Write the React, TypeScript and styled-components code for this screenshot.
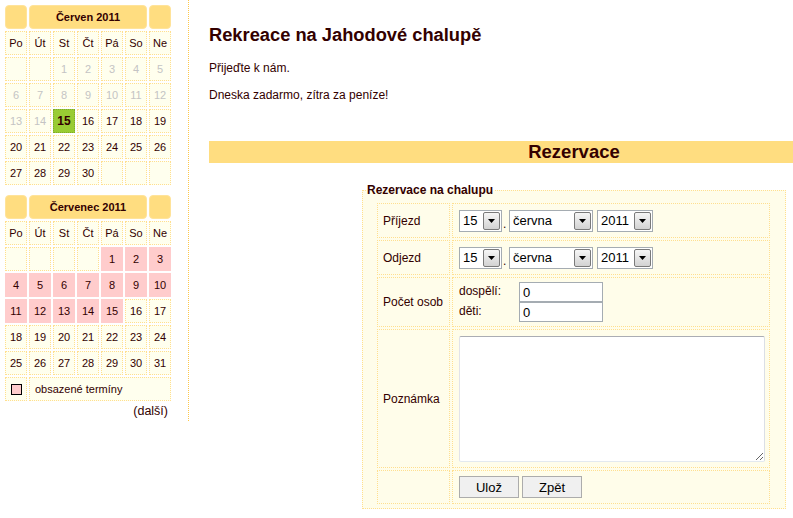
import React from 'react';
import styled, { createGlobalStyle, css } from 'styled-components';

const Global = createGlobalStyle`
  html, body { margin: 0; padding: 0; background: #fff; overflow: hidden; }
  body { font-family: "Liberation Sans", Arial, sans-serif; color: #330000; font-size: 12px; }
`;

const Page = styled.div`
  display: flex;
  align-items: flex-start;
  width: 100%;
  overflow: hidden;
`;

const Sidebar = styled.aside`
  box-sizing: border-box;
  width: 189px;
  flex: none;
  padding: 5px 0 2px 5px;
  border-right: 1px dotted #ffc84a;
  display: flex;
  flex-direction: column;
  gap: 10px;
`;

const CalGrid = styled.div`
  display: grid;
  grid-template-columns: repeat(7, 22px);
  grid-auto-rows: 24px;
  gap: 2px;
  font-size: 11px;
`;

type Kind = 'corner' | 'title' | 'dow' | 'day' | 'muted' | 'today' | 'busy' | 'empty';

const Cell = styled.div<{ $kind: Kind; $span?: number }>`
  box-sizing: border-box;
  display: flex;
  align-items: center;
  justify-content: center;
  grid-column: span ${(p) => p.$span ?? 1};
  background: #ffffee;
  border: 1px dotted #ffdf90;
  color: #330000;
  ${(p) =>
    (p.$kind === 'corner' || p.$kind === 'title') &&
    css`
      background: #ffdd80;
      border: 1px solid #ffe39a;
      border-radius: 4px;
      font-weight: bold;
    `}
  ${(p) => p.$kind === 'muted' && css`color: #c4c4c4;`}
  ${(p) =>
    p.$kind === 'today' &&
    css`
      background: #99cc33;
      border: 1px dotted #7ea82a;
      font-weight: bold;
      font-size: 12px;
    `}
  ${(p) =>
    p.$kind === 'busy' &&
    css`
      background: #ffcccc;
      border: 1px solid #ffcccc;
    `}
`;

const LegendCell = styled(Cell)`
  justify-content: flex-start;
  padding-left: 5px;
`;

const Swatch = styled.span`
  box-sizing: border-box;
  width: 11px;
  height: 11px;
  background: #ffcccc;
  border: 1px solid #000;
`;

const MoreLink = styled.a`
  align-self: flex-end;
  margin: -7px 20px 0 0;
  font-size: 12.5px;
  line-height: 15px;
  color: #330000;
  text-decoration: none;
`;

const Main = styled.main`
  box-sizing: border-box;
  width: 730px;
  margin-left: 20px;
  padding-top: 24px;
  flex: none;
`;

const Title = styled.h1`
  margin: 0;
  font-size: 18.3px;
  line-height: 21px;
  font-weight: bold;
  color: #330000;
`;

const Para = styled.p`
  margin: 16px 0 0;
  font-size: 12px;
  line-height: 14px;
  & + & { margin-top: 13px; }
`;

const Band = styled.h2`
  margin: 39px 0 0;
  height: 22px;
  background: #ffdd80;
  font-size: 18.5px;
  line-height: 22px;
  text-align: center;
  font-weight: bold;
  color: #330000;
`;

const Fieldset = styled.fieldset`
  box-sizing: border-box;
  width: 424px;
  margin: 20px auto 0;
  padding: 6px 14px 4px;
  border: 1px dotted #ffdf90;
  background: #fffdea;
`;

const Legend = styled.legend`
  padding: 0 1px;
  margin-left: -11px;
  font-size: 12px;
  line-height: 14px;
  font-weight: bold;
  color: #330000;
`;

const FormTable = styled.div`
  display: grid;
  grid-template-columns: 73px 318px;
  grid-template-rows: 35px 35px 50px 139px 34px;
  gap: 2px;
`;

const FCell = styled.div<{ $label?: boolean }>`
  box-sizing: border-box;
  border: 1px dotted #ffdf90;
  background: #fffdea;
  display: flex;
  align-items: center;
  padding: ${(p) => (p.$label ? '0 0 0 5px' : '0 0 0 6px')};
  font-size: 12px;
  color: #330000;
`;

const DateRow = styled.div`
  display: flex;
  align-items: center;
`;

const SelectBox = styled.div<{ $w: number }>`
  box-sizing: border-box;
  width: ${(p) => p.$w}px;
  height: 22px;
  display: flex;
  align-items: center;
  justify-content: space-between;
  border: 1px solid #a5acb2;
  background: #fff;
  padding: 0 1px 0 3px;
  font-size: 13px;
  color: #000;
`;

const DropBtn = styled.span`
  box-sizing: border-box;
  width: 17px;
  height: 18px;
  border: 1px solid #7a7a7a;
  border-radius: 2px;
  background: linear-gradient(#f6f6f6, #d2d2d2);
  display: flex;
  align-items: center;
  justify-content: center;
`;

const Dot = styled.span`
  width: 6px;
  padding-left: 1px;
  font-size: 12px;
  align-self: flex-end;
  line-height: 16px;
`;

const Gap = styled.span<{ $w: number }>`
  width: ${(p) => p.$w}px;
`;

const PeopleGrid = styled.div`
  display: grid;
  grid-template-columns: 60px 84px;
  grid-template-rows: 20px 20px;
  align-self: flex-start;
  margin-top: 4px;
`;

const SmallLabel = styled.span`
  font-size: 12px;
  line-height: 14px;
  padding-top: 2px;
`;

const TextInput = styled.input`
  box-sizing: border-box;
  width: 84px;
  height: 20px;
  border: 1px solid #a5acb2;
  padding: 0 3px;
  font-family: "Liberation Sans", Arial, sans-serif;
  font-size: 13px;
  color: #000;
  background: #fff;
  outline: none;
`;

const Note = styled.textarea`
  box-sizing: border-box;
  width: 306px;
  height: 126px;
  border: 1px solid;
  border-color: #abadb3 #dbdfe6 #e3e9ef #e2e3ea;
  border-radius: 2px;
  background: #fff;
  font-family: "Liberation Sans", Arial, sans-serif;
  font-size: 13px;
  outline: none;
`;

const Btn = styled.button`
  box-sizing: border-box;
  width: 60px;
  height: 22px;
  margin-right: 3px;
  border: 1px solid #acacac;
  background: #f0f0f0;
  font-family: "Liberation Sans", Arial, sans-serif;
  font-size: 13px;
  color: #000;
  padding: 0;
`;

const Arrow = () => (
  <svg width="7" height="4" viewBox="0 0 7 4">
    <path d="M0 0 H7 L3.5 4 Z" fill="#000" />
  </svg>
);

const Select = ({ w, value }: { w: number; value: string }) => (
  <SelectBox $w={w}>
    <span>{value}</span>
    <DropBtn>
      <Arrow />
    </DropBtn>
  </SelectBox>
);

const DOW = ['Po', 'Út', 'St', 'Čt', 'Pá', 'So', 'Ne'];

type Day = { n?: number; kind: Kind };

function buildMonth(offset: number, days: number, kindOf: (d: number) => Kind): Day[] {
  const out: Day[] = [];
  for (let i = 0; i < offset; i++) out.push({ kind: 'empty' });
  for (let d = 1; d <= days; d++) out.push({ n: d, kind: kindOf(d) });
  while (out.length % 7) out.push({ kind: 'empty' });
  return out;
}

const june = buildMonth(2, 30, (d) => (d < 15 ? 'muted' : d === 15 ? 'today' : 'day'));
const july = buildMonth(4, 31, (d) => (d <= 15 ? 'busy' : 'day'));

const Calendar = ({ title, days, legend }: { title: string; days: Day[]; legend?: boolean }) => (
  <CalGrid>
    <Cell $kind="corner" />
    <Cell $kind="title" $span={5}>
      {title}
    </Cell>
    <Cell $kind="corner" />
    {DOW.map((d) => (
      <Cell key={d} $kind="dow">
        {d}
      </Cell>
    ))}
    {days.map((d, i) => (
      <Cell key={i} $kind={d.kind}>
        {d.n ?? ''}
      </Cell>
    ))}
    {legend && (
      <>
        <Cell $kind="day">
          <Swatch />
        </Cell>
        <LegendCell $kind="day" $span={6}>
          obsazené termíny
        </LegendCell>
      </>
    )}
  </CalGrid>
);

export default function App() {
  return (
    <>
      <Global />
      <Page>
        <Sidebar>
          <Calendar title="Červen 2011" days={june} />
          <Calendar title="Červenec 2011" days={july} legend />
          <MoreLink href="#">(další)</MoreLink>
        </Sidebar>
        <Main>
          <Title>Rekreace na Jahodové chalupě</Title>
          <Para>Přijeďte k nám.</Para>
          <Para>Dneska zadarmo, zítra za peníze!</Para>
          <Band>Rezervace</Band>
          <Fieldset>
            <Legend>Rezervace na chalupu</Legend>
            <FormTable>
              <FCell $label>Příjezd</FCell>
              <FCell>
                <DateRow>
                  <Select w={43} value="15" />
                  <Dot>.</Dot>
                  <Select w={84} value="června" />
                  <Gap $w={4} />
                  <Select w={56} value="2011" />
                </DateRow>
              </FCell>
              <FCell $label>Odjezd</FCell>
              <FCell>
                <DateRow>
                  <Select w={43} value="15" />
                  <Dot>.</Dot>
                  <Select w={84} value="června" />
                  <Gap $w={4} />
                  <Select w={56} value="2011" />
                </DateRow>
              </FCell>
              <FCell $label>Počet osob</FCell>
              <FCell>
                <PeopleGrid>
                  <SmallLabel>dospělí:</SmallLabel>
                  <TextInput defaultValue="0" />
                  <SmallLabel>děti:</SmallLabel>
                  <TextInput defaultValue="0" />
                </PeopleGrid>
              </FCell>
              <FCell $label>Poznámka</FCell>
              <FCell>
                <Note />
              </FCell>
              <FCell $label />
              <FCell>
                <Btn type="button">Ulož</Btn>
                <Btn type="button">Zpět</Btn>
              </FCell>
            </FormTable>
          </Fieldset>
        </Main>
      </Page>
    </>
  );
}
